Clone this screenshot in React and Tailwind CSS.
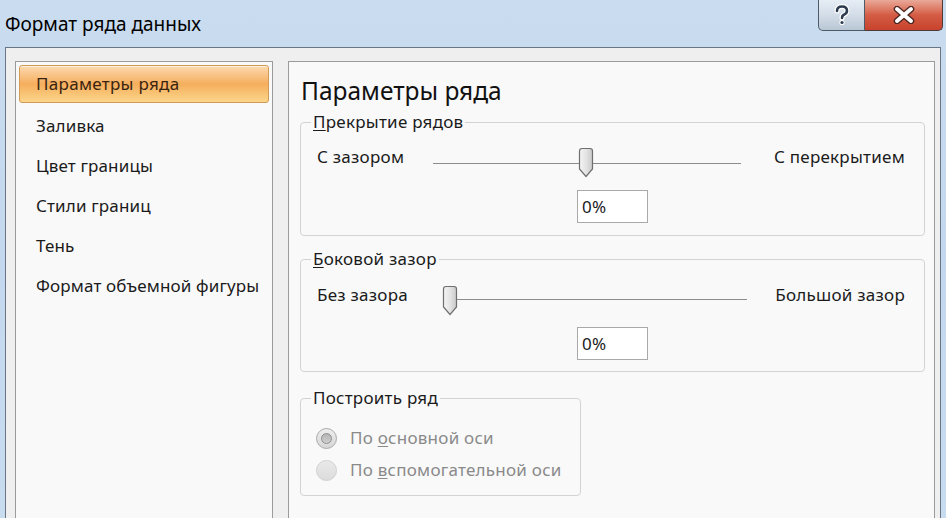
import React from "react";

function Thumb() {
  return (
    <svg width="16" height="31" viewBox="0 0 16 31" className="block">
      <defs>
        <linearGradient id="tg" x1="0" y1="0" x2="1" y2="0">
          <stop offset="0" stopColor="#f4f4f4" />
          <stop offset="0.5" stopColor="#e4e4e4" />
          <stop offset="1" stopColor="#c9c9c9" />
        </linearGradient>
      </defs>
      <path
        d="M1.5 4 Q1.5 1.5 4 1.5 H12 Q14.5 1.5 14.5 4 V22 L8 29.5 L1.5 22 Z"
        fill="url(#tg)"
        stroke="#6f6f6f"
        strokeWidth="1.2"
      />
    </svg>
  );
}

function Slider({ left, right, labelW, trackW, thumbX, lineY }) {
  return (
    <div className="flex items-start pl-[16px] pr-[19px]">
      <div className="shrink-0 leading-[20px] whitespace-nowrap" style={{ width: labelW }}>
        {left}
      </div>
      <div className="relative h-[31px] shrink-0" style={{ width: trackW }}>
        <div
          className="absolute left-0 right-0 h-px bg-[#8c8c8c]"
          style={{ top: lineY }}
        />
        <div className="absolute top-0" style={{ left: thumbX }}>
          <Thumb />
        </div>
      </div>
      <div className="flex-1 text-right leading-[20px] whitespace-nowrap">{right}</div>
    </div>
  );
}

function PctBox() {
  return (
    <div className="flex justify-center">
      <div className="w-[71px] h-[33px] border border-[#a9a9a9] bg-white pl-[4px] flex items-center leading-[20px]">
        0%
      </div>
    </div>
  );
}

export default function App() {
  const items = [
    "Заливка",
    "Цвет границы",
    "Стили границ",
    "Тень",
    "Формат объемной фигуры",
  ];
  return (
    <div
      className="w-[946px] h-[518px] overflow-hidden flex flex-col bg-gradient-to-b from-[#cadcef] via-[#c3d8ee] to-[#c8dcf0] text-[#1b1b1b]"
      style={{ fontFamily: '"Noto Sans", "DejaVu Sans", sans-serif' }}
    >
      {/* Title bar */}
      <div className="h-[47px] shrink-0 flex items-start">
        <div className="pl-[5px] pt-[11px] text-[19px] leading-[26px] text-black">
          Формат ряда данных
        </div>
        <div className="ml-auto mr-[3px] flex h-[31px]">
          <div className="w-[47px] h-full border border-t-0 border-[#4d5a6a] rounded-bl-[5px] bg-gradient-to-b from-[#e6edf5] via-[#d3dde8] to-[#b9c6d4] flex items-center justify-center">
            <svg width="18" height="22" viewBox="0 0 18 22">
              <path
                d="M4 7 Q4 2.5 9 2.5 Q14 2.5 14 6.8 Q14 9.5 10.5 11 Q9 11.8 9 14"
                fill="none"
                stroke="#ffffff"
                strokeWidth="5"
                strokeLinecap="round"
              />
              <path
                d="M4 7 Q4 2.5 9 2.5 Q14 2.5 14 6.8 Q14 9.5 10.5 11 Q9 11.8 9 14"
                fill="none"
                stroke="#2f3d50"
                strokeWidth="2.6"
                strokeLinecap="round"
              />
              <circle cx="9" cy="18.5" r="2.6" fill="#ffffff" />
              <circle cx="9" cy="18.5" r="1.6" fill="#2f3d50" />
            </svg>
          </div>
          <div className="w-[78px] h-full border border-t-0 border-l-0 border-[#4d3a3a] rounded-br-[5px] bg-gradient-to-b from-[#e8a898] via-[#d45c45] to-[#c8422c] flex items-center justify-center">
            <svg width="22" height="18" viewBox="0 0 22 18">
              <path
                d="M4 3 L18 15 M18 3 L4 15"
                stroke="#4a2420"
                strokeWidth="6.5"
                strokeLinecap="round"
              />
              <path
                d="M4 3 L18 15 M18 3 L4 15"
                stroke="#ffffff"
                strokeWidth="4"
                strokeLinecap="round"
              />
            </svg>
          </div>
        </div>
      </div>

      {/* Client area */}
      <div className="flex-1 mx-[5px] border-t border-l border-r border-[#6a7685] bg-[#efefef] flex pt-[13px] pl-[9px] pr-[5px] gap-[15px] min-h-0">
        {/* Left nav */}
        <div className="w-[258px] shrink-0 border border-b-0 border-[#9b9b9b] bg-[#f9f9f9] p-[3px] text-[17px] tracking-[0.15px]">
          <div className="h-[38px] rounded-[3px] border border-[#d09a56] bg-gradient-to-b from-[#fbd9ae] via-[#f5ae5c] to-[#fbd68a] flex items-center pl-[16px] text-[#3a2410] shadow-[inset_0_1px_0_#fff2dc] tracking-[0.3px]">
            Параметры ряда
          </div>
          <div className="mt-[3px] flex flex-col">
            {items.map((t) => (
              <div key={t} className="h-[40px] flex items-center pl-[17px] whitespace-nowrap">
                {t}
              </div>
            ))}
          </div>
        </div>

        {/* Right pane */}
        <div className="flex-1 border border-b-0 border-[#9b9b9b] bg-[#f9f9f9] pl-[11px] pr-[9px] pt-[14px] text-[17px] tracking-[0.25px]">
          <div className="text-[24.5px] leading-[30px] pl-[1px] text-[#111] tracking-normal">
            Параметры ряда
          </div>

          <fieldset className="mt-[6px] border border-[#d3d3d3] rounded-[4px] pb-[12px]">
            <legend className="ml-[10px] px-[2px] leading-[20px]">
              <span className="underline underline-offset-2">П</span>рекрытие рядов
            </legend>
            <div className="mt-[15px]">
              <Slider
                left="С зазором"
                right="С перекрытием"
                labelW={116}
                trackW={308}
                thumbX={145}
                lineY={16}
              />
            </div>
            <div className="mt-[12px]">
              <PctBox />
            </div>
          </fieldset>

          <fieldset className="mt-[13px] border border-[#d3d3d3] rounded-[4px] pb-[11px]">
            <legend className="ml-[10px] px-[2px] leading-[20px]">
              <span className="underline underline-offset-2">Б</span>оковой зазор
            </legend>
            <div className="mt-[16px]">
              <Slider
                left="Без зазора"
                right="Большой зазор"
                labelW={127}
                trackW={303}
                thumbX={-2}
                lineY={14}
              />
            </div>
            <div className="mt-[11px]">
              <PctBox />
            </div>
          </fieldset>

          <fieldset className="mt-[16px] w-[281px] border border-[#d3d3d3] rounded-[4px] pb-[15px] pl-[15px]">
            <legend className="ml-[-5px] px-[2px] leading-[20px]">
              Построить ряд
            </legend>
            <div className="mt-[20px] flex flex-col gap-[12px] text-[#8a8a8a]">
              <div className="flex items-center gap-[13px] h-[20px]">
                <div className="w-[21px] h-[21px] rounded-full border border-[#a9a9a9] bg-gradient-to-b from-[#eeeeee] to-[#d6d6d6] flex items-center justify-center shrink-0">
                  <div className="w-[11px] h-[11px] rounded-full border border-[#8f8f8f] bg-gradient-to-b from-[#b4b4b4] to-[#cfcfcf]" />
                </div>
                <span className="whitespace-nowrap">
                  По <span className="underline underline-offset-2">о</span>сновной оси
                </span>
              </div>
              <div className="flex items-center gap-[13px] h-[20px]">
                <div className="w-[21px] h-[21px] rounded-full border border-[#d0d0d0] bg-gradient-to-b from-[#e9e9e9] to-[#dcdcdc] shrink-0" />
                <span className="whitespace-nowrap">
                  По <span className="underline underline-offset-2">в</span>спомогательной оси
                </span>
              </div>
            </div>
          </fieldset>
        </div>
      </div>
    </div>
  );
}
